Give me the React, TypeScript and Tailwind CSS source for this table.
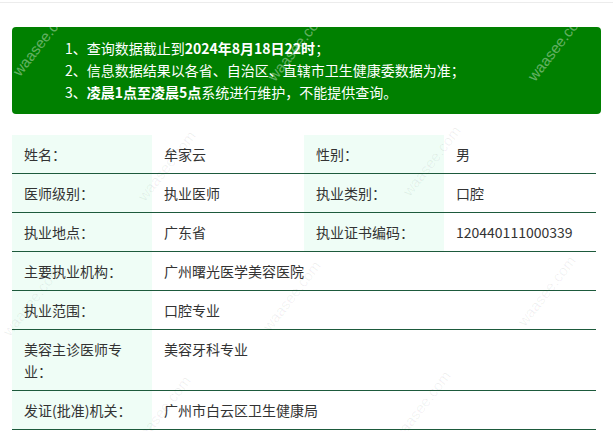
import React from 'react';

type Row = {
  label: string;
  value: string;
  label2?: string;
  value2?: string;
};

const rows: Row[] = [
  { label: '姓名：', value: '牟家云', label2: '性别：', value2: '男' },
  { label: '医师级别：', value: '执业医师', label2: '执业类别：', value2: '口腔' },
  { label: '执业地点：', value: '广东省', label2: '执业证书编码：', value2: '120440111000339' },
  { label: '主要执业机构：', value: '广州曙光医学美容医院' },
  { label: '执业范围：', value: '口腔专业' },
  { label: '美容主诊医师专业：', value: '美容牙科专业' },
  { label: '发证(批准)机关：', value: '广州市白云区卫生健康局' },
];

// faint diagonal site marks laid over the page
const marks = [
  { left: 0, top: 30, light: true },
  { left: 255, top: 35, light: true },
  { left: 515, top: 35, light: true },
  { left: 125, top: 155, light: false },
  { left: 390, top: 150, light: false },
  { left: -10, top: 290, light: false },
  { left: 250, top: 285, light: false },
  { left: 505, top: 280, light: false },
  { left: 120, top: 400, light: false },
  { left: 380, top: 395, light: false },
];

export default function App() {
  return (
    <div
      className="relative w-[613px] h-[431px] overflow-hidden bg-white text-[14px] text-[#333]"
      style={{ fontFamily: '"Noto Sans CJK SC", "Liberation Sans", sans-serif' }}
    >
      <div className="mt-[2px] h-px bg-[#ececec]" />

      {/* notice */}
      <div className="mx-3 mt-6 h-[87px] rounded bg-[#008000] pl-[53px] pt-[10px] text-white leading-[22px]">
        <p>
          1、查询数据截止到<b>2024年8月18日22时</b>；
        </p>
        <p>2、信息数据结果以各省、自治区、直辖市卫生健康委数据为准；</p>
        <p>
          3、<b>凌晨1点至凌晨5点</b>系统进行维护，不能提供查询。
        </p>
      </div>

      {/* table */}
      <div className="mx-3 mt-[21px] w-[584px]">
        {rows.map((r) => (
          <div key={r.label} className="flex border-b border-[#1d5a3c] leading-[22px]">
            <div className="w-[140px] shrink-0 bg-[#effdf6] px-3 py-2">{r.label}</div>
            {r.label2 ? (
              <>
                <div className="w-[152px] shrink-0 px-3 py-2">{r.value}</div>
                <div className="w-[140px] shrink-0 bg-[#effdf6] px-3 py-2">{r.label2}</div>
                <div className="w-[152px] shrink-0 px-3 py-2">{r.value2}</div>
              </>
            ) : (
              <div className="flex-1 px-3 py-2">{r.value}</div>
            )}
          </div>
        ))}
      </div>

      {marks.map((m, i) => (
        <div
          key={i}
          className={`pointer-events-none absolute -rotate-[52deg] whitespace-nowrap text-[15px] ${
            m.light ? 'text-white/40' : 'text-[#000]/[0.06]'
          }`}
          style={{ left: m.left, top: m.top, fontFamily: '"Liberation Sans", sans-serif' }}
        >
          waasee.com
        </div>
      ))}
    </div>
  );
}
